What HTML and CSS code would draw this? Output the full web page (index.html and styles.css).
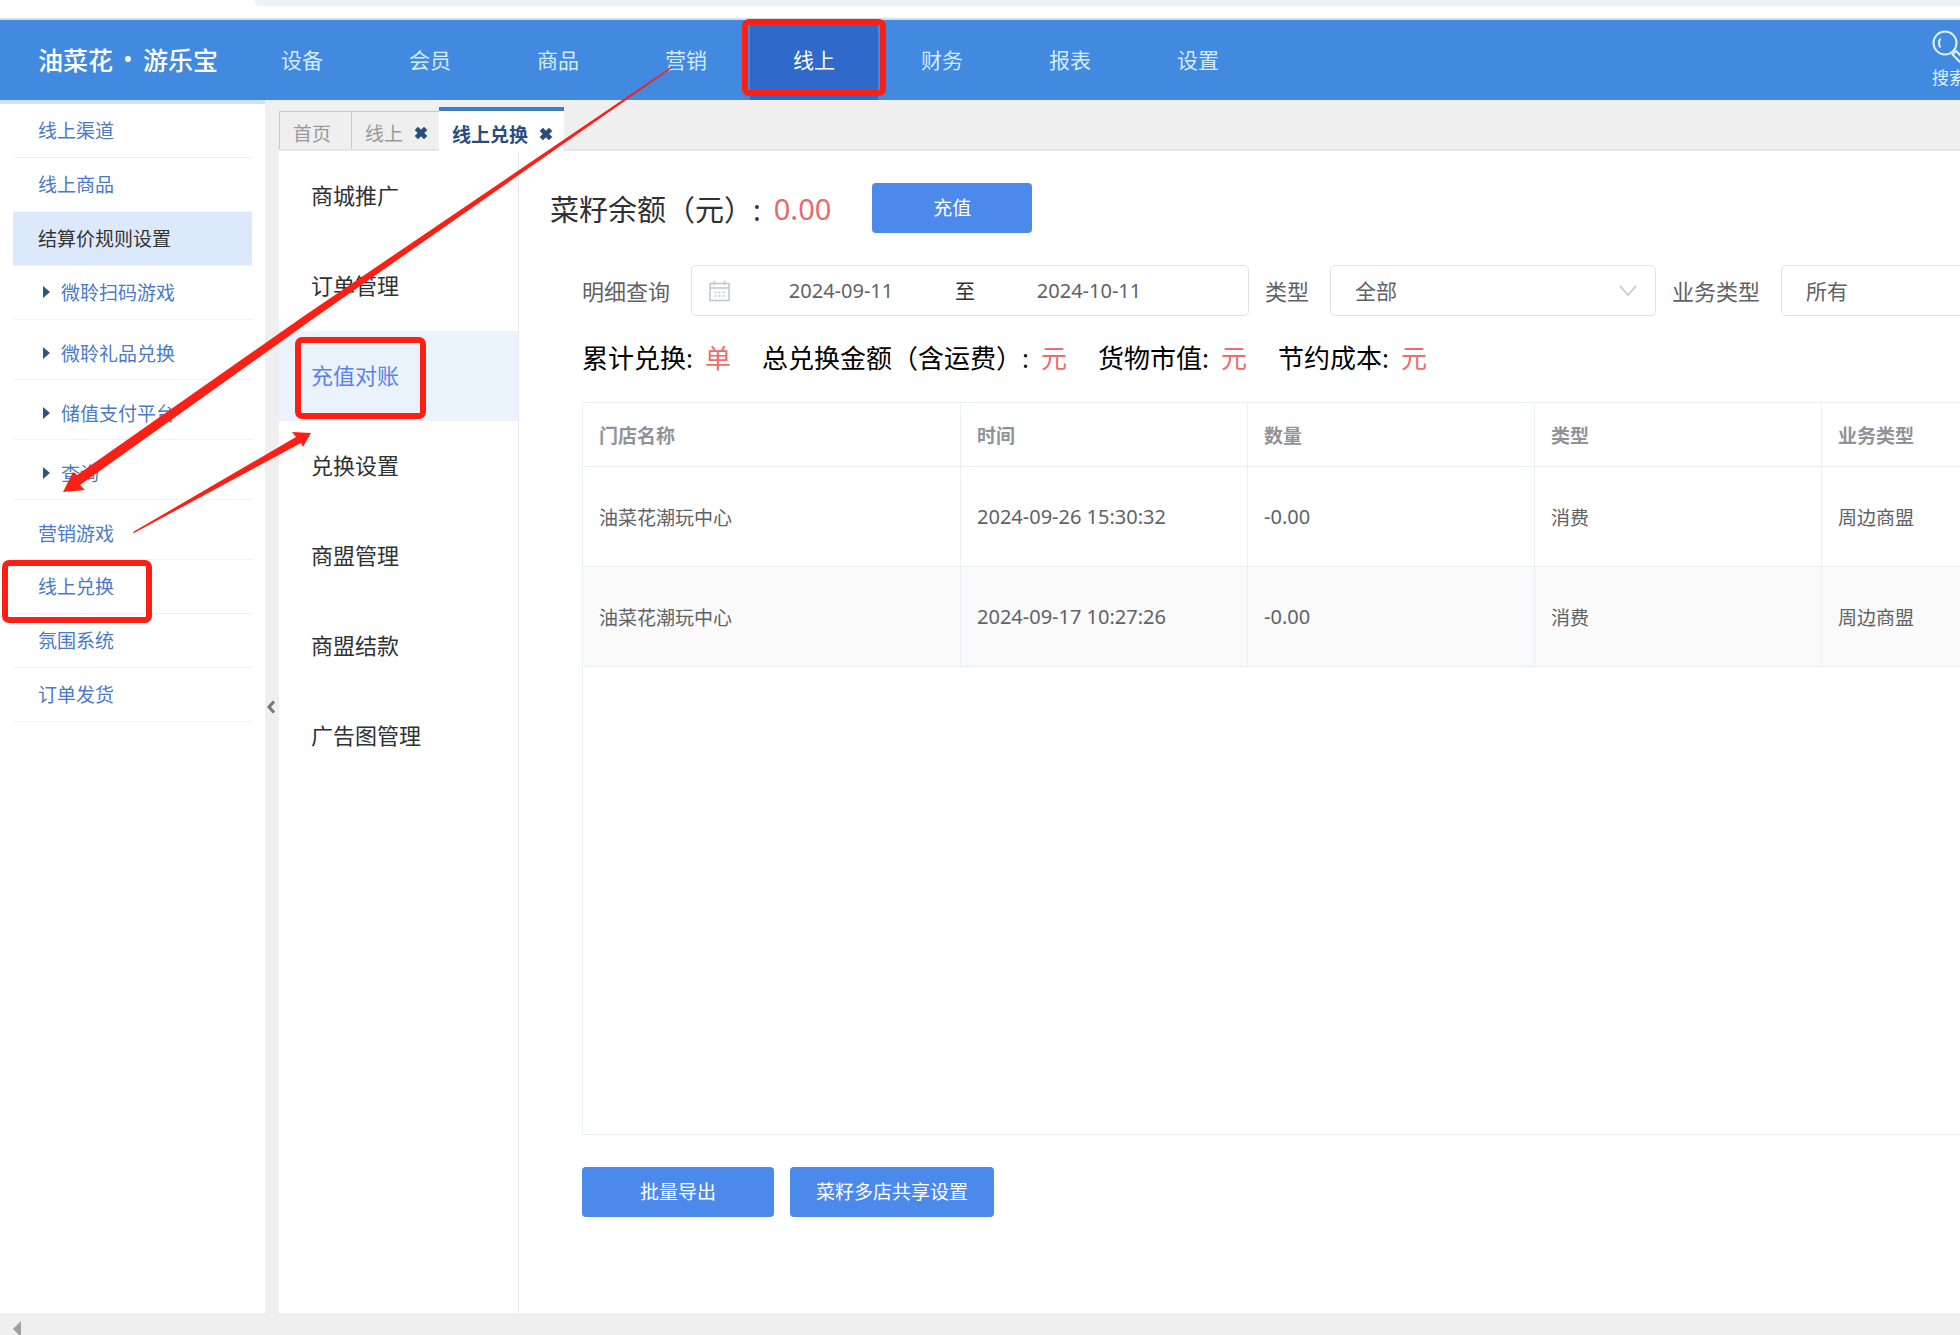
FILE: index.html
```html
<!DOCTYPE html>
<html lang="zh-CN">
<head>
<meta charset="utf-8">
<meta name="viewport" content="width=device-width, initial-scale=1">
<title>线上兑换</title>
<link rel="stylesheet" href="styles.css">
</head>
<body>
<div class="browser-edge"><div class="address-bar"></div></div>
<header class="topbar">
  <a class="logo" href="#"><span>油菜花</span><i class="logo-dot"></i><span>游乐宝</span></a>
  <nav class="main-nav">
    <a href="#">设备</a><a href="#">会员</a><a href="#">商品</a><a href="#">营销</a><a href="#" class="active">线上</a><a href="#">财务</a><a href="#">报表</a><a href="#">设置</a>
  </nav>
  <button class="search" type="button">
    <svg width="36" height="36" viewBox="0 0 36 36" fill="none" stroke="currentColor" stroke-width="2"><circle cx="13" cy="13" r="11.5"/><path d="M8.5 8.5c-2 3-2 6 0 9"/><path d="M20.500 24.500l3.500-3.500 9.500 9.500-3.500 3.500z"/></svg>
    <span>搜索</span>
  </button>
</header>
<div class="workspace">
  <nav class="sidebar">
    <a href="#">线上渠道</a>
    <a href="#">线上商品</a>
    <a href="#" class="current">结算价规则设置</a>
    <a href="#" class="group">微聆扫码游戏</a>
    <a href="#" class="group tall">微聆礼品兑换</a>
    <a href="#" class="group tall">储值支付平台</a>
    <a href="#" class="group tall">查询</a>
    <a href="#" class="tall">营销游戏</a>
    <a href="#">线上兑换</a>
    <a href="#">氛围系统</a>
    <a href="#">订单发货</a>
  </nav>
  <button class="collapse" type="button" aria-label="收起"><svg width="10" height="14" viewBox="0 0 10 14" fill="none" stroke="#777" stroke-width="3"><path d="M8 1.500L3 7l5 5.500"/></svg></button>
  <section class="content">
    <div class="tabs">
      <a class="tab" href="#">首页</a>
      <a class="tab" href="#">线上<svg class="close" viewBox="0 0 12 12"><path d="M2 2l8 8M10 2l-8 8"/></svg></a>
      <a class="tab active" href="#">线上兑换<svg class="close" viewBox="0 0 12 12"><path d="M2 2l8 8M10 2l-8 8"/></svg></a>
    </div>
    <div class="panes">
      <nav class="submenu">
        <a href="#">商城推广</a>
        <a href="#">订单管理</a>
        <a href="#" class="active">充值对账</a>
        <a href="#">兑换设置</a>
        <a href="#">商盟管理</a>
        <a href="#">商盟结款</a>
        <a href="#">广告图管理</a>
      </nav>
      <main class="main">
        <div class="balance">
          <span>菜籽余额（元）:</span><span class="amount">0.00</span>
          <button class="btn btn-recharge" type="button">充值</button>
        </div>
        <form class="filters">
          <label for="from">明细查询</label>
          <div class="range">
            <svg width="21" height="22" viewBox="0 0 21 22" fill="none" stroke="#c0c4cc" stroke-width="1.500"><path d="M1 3.500h19v17H1zM1 8h19M5.500 1v4M15.500 1v4"/><path stroke-dasharray="2 2" d="M5.500 12.500h10M5.500 16h10"/></svg>
            <input id="from" type="text" value="2024-09-11">
            <span>至</span>
            <input type="text" value="2024-10-11" aria-label="结束日期">
          </div>
          <label for="kind">类型</label>
          <div class="select">
            <select id="kind"><option>全部</option></select>
            <svg width="18" height="12" viewBox="0 0 18 12" fill="none" stroke="#c0c4cc" stroke-width="1.500"><path d="M1 1l8 9 8-9"/></svg>
          </div>
          <label for="biz">业务类型</label>
          <div class="select">
            <select id="biz"><option>所有</option></select>
            <svg width="18" height="12" viewBox="0 0 18 12" fill="none" stroke="#c0c4cc" stroke-width="1.500"><path d="M1 1l8 9 8-9"/></svg>
          </div>
        </form>
        <div class="stats">
          <p>累计兑换:<em>单</em></p>
          <p>总兑换金额（含运费）:<em>元</em></p>
          <p>货物市值:<em>元</em></p>
          <p>节约成本:<em>元</em></p>
        </div>
        <div class="table-wrap">
          <table>
            <colgroup><col class="col-store"><col><col><col><col></colgroup>
            <thead><tr><th>门店名称</th><th>时间</th><th>数量</th><th>类型</th><th>业务类型</th></tr></thead>
            <tbody>
              <tr><td>油菜花潮玩中心</td><td class="num">2024-09-26 15:30:32</td><td class="num">-0.00</td><td>消费</td><td>周边商盟</td></tr>
              <tr><td>油菜花潮玩中心</td><td class="num">2024-09-17 10:27:26</td><td class="num">-0.00</td><td>消费</td><td>周边商盟</td></tr>
            </tbody>
          </table>
        </div>
        <div class="actions">
          <button class="btn btn-export" type="button">批量导出</button>
          <button class="btn btn-share" type="button">菜籽多店共享设置</button>
        </div>
      </main>
    </div>
  </section>
</div>
<footer class="scrollbar"><svg width="8" height="16" viewBox="0 0 8 16"><path d="M8 0v16L0 8z" fill="#a0a0a0"/></svg></footer>
<svg class="marks" width="900" height="640" viewBox="0 0 900 640">
  <g fill="none" stroke="#fb2016" stroke-width="6">
    <rect x="745" y="22" width="138" height="71" rx="4"/>
    <rect x="298" y="340" width="125" height="76" rx="4"/>
    <rect x="5" y="563" width="144" height="57" rx="4"/>
  </g>
  <g fill="#fb2016">
    <path d="M671 67L304 316 77 475 73 472 63 492 85 490 80 485 310 321 672 68z"/>
    <path d="M133 532L296 437 292 432 311 433 303 447 301 443 134 533z"/>
  </g>
</svg>
</body>
</html>
```
FILE: styles.css
```css
* { box-sizing: border-box; }

body {
  margin: 0;
  min-height: 100vh;
  display: flex;
  flex-direction: column;
  position: relative;
  overflow-x: hidden;
  background: #fff;
  color: #303133;
  font-family: "Noto Sans", "Noto Sans CJK SC", sans-serif;
  font-size: 19px;
  text-spacing-trim: space-all;
}

a { color: inherit; text-decoration: none; }
button, input, select { font: inherit; }
button { border: 0; padding: 0; cursor: pointer; }

.browser-edge {
  height: 20px;
  padding-left: 254px;
  border-bottom: 2px solid #dadfdc;
}
.address-bar { height: 6px; background: #edf1fb; border-bottom-left-radius: 10px; }

.topbar {
  display: flex;
  height: 80px;
  overflow: hidden;
  background: #4289e0;
  color: #d3ecff;
}
.logo {
  flex: none;
  width: 238px;
  padding: 0 0 2px 38px;
  display: flex;
  align-items: center;
  gap: 12px;
  font-size: 25px;
  font-weight: 500;
  color: #fff;
}
.logo-dot { width: 6px; height: 6px; border-radius: 50%; background: #fff; }
.main-nav { display: flex; }
.main-nav a {
  width: 128px;
  line-height: 80px;
  text-align: center;
  font-size: 21px;
}
.main-nav .active { background: #2f6aca; color: #fff; }
.search {
  flex: none;
  display: flex;
  flex-direction: column;
  align-items: flex-start;
  margin: 10px -8px 0 auto;
  background: none;
  color: #dff3ff;
  font-size: 17px;
  line-height: 24px;
}

.workspace { flex: 1; display: flex; background: #efefef; }

.sidebar {
  flex: none;
  width: 265px;
  padding: 0 13px;
  background: #fff;
  border-top: 4px solid #cfe2fb;
  color: #4a7ac8;
}
.sidebar a {
  display: flex;
  align-items: center;
  height: 54px;
  padding: 0 0 2px 25px;
  border-bottom: 1px solid #f2f2f2;
}
.sidebar .tall { height: 60px; padding-top: 8px; }
.sidebar .current { background: #dce9fb; color: #333; }
.sidebar .group { padding-left: 30px; }
.sidebar .group::before {
  content: "";
  margin-right: 11px;
  border-left: 7px solid #2b5586;
  border-top: 6px solid transparent;
  border-bottom: 6px solid transparent;
}

.collapse { flex: none; width: 14px; padding-right: 2px; background: none; display: flex; align-items: center; justify-content: center; }

.content { flex: 1; min-width: 0; display: flex; flex-direction: column; }
.tabs {
  display: flex;
  align-items: flex-end;
  height: 51px;
  border-bottom: 2px solid #e6e6e6;
}
.tab {
  display: flex;
  align-items: center;
  gap: 11px;
  height: 38px;
  padding: 5px 11px 0 13px;
  border: 1px solid #c8c8c8;
  border-width: 1px 0 0 1px;
  color: #999;
}
.tab:first-child { padding-right: 20px; }
.tab.active {
  height: 44px;
  margin-bottom: -2px;
  border-width: 4px 0 0;
  border-color: #3b7cc6;
  background: #fff;
  color: #2c4c7c;
  font-weight: 700;
}
.close { width: 14px; height: 14px; fill: none; stroke: #2b4d7b; stroke-width: 4; }

.panes { flex: 1; display: flex; background: #fff; }
.submenu { flex: none; width: 240px; border-right: 1px solid #e6ebf2; font-size: 22px; }
.submenu a { display: flex; align-items: center; height: 90px; padding: 0 0 4px 32px; }
.submenu .active { background: #eaf2fc; color: #5b82ea; }

.main {
  flex: 1;
  min-width: 0;
  overflow: hidden;
  display: flex;
  flex-direction: column;
  padding: 32px 0 96px 63px;
}
.btn { height: 50px; padding-bottom: 2px; border-radius: 4px; background: #4b89ea; color: #fff; }
.btn-recharge { width: 160px; margin-left: 41px; }
.btn-export { width: 192px; }
.btn-share { width: 204px; }

.balance { display: flex; align-items: center; margin-left: -32px; font-size: 29px; white-space: nowrap; }
.balance .btn { font-size: 19px; }
.amount { margin-left: 13px; color: #e8696d; }

.filters {
  display: flex;
  align-items: center;
  margin-top: 32px;
  color: #606266;
  font-size: 22px;
  white-space: nowrap;
}
.filters label { flex: none; margin: 0 21px 0 16px; padding-bottom: 2px; }
.filters label:first-child { margin-left: 0; }
.range, .select { flex: none; height: 51px; border: 1px solid #dfe2e8; border-radius: 5px; }
.range { display: flex; align-items: center; width: 558px; padding-left: 17px; font-size: 20px; }
.range svg { margin-right: 10px; }
.range input { width: 202px; border: 0; padding: 0; background: none; text-align: center; color: inherit; }
.range span { width: 46px; text-align: center; color: #303133; }
.select { display: flex; align-items: center; width: 326px; position: relative; font-size: 21px; }
.select select {
  width: 100%;
  height: 100%;
  padding: 0 24px;
  border: 0;
  appearance: none;
  background: none;
  color: inherit;
}
.select svg { position: absolute; right: 18px; pointer-events: none; }

.stats {
  display: flex;
  gap: 31px;
  margin: 24px 0 26px;
  color: #000;
  font-size: 26px;
  line-height: 36px;
  white-space: nowrap;
}
.stats p { margin: 0; }
.stats em { margin-left: 12px; font-style: normal; color: #ef6c6e; }

.table-wrap { flex: 1; border: 1px solid #ebeef2; border-right: 0; }
table { width: 1526px; table-layout: fixed; border-collapse: separate; border-spacing: 0; color: #606266; }
.col-store { width: 378px; }
th, td { padding: 0 16px; border: 1px solid #ebeef2; border-width: 0 1px 1px 0; text-align: left; }
th { height: 64px; color: #909399; font-weight: 700; }
td { height: 100px; }
tbody tr:nth-child(even) { background: #fafafa; }
.num { font-size: 20px; }

.actions { display: flex; gap: 16px; margin-top: 32px; }

.scrollbar { height: 22px; padding: 8px 0 0 13px; overflow: hidden; background: #efefef; }
.scrollbar svg { display: block; }

.marks { position: absolute; top: 0; left: 0; pointer-events: none; }
```
